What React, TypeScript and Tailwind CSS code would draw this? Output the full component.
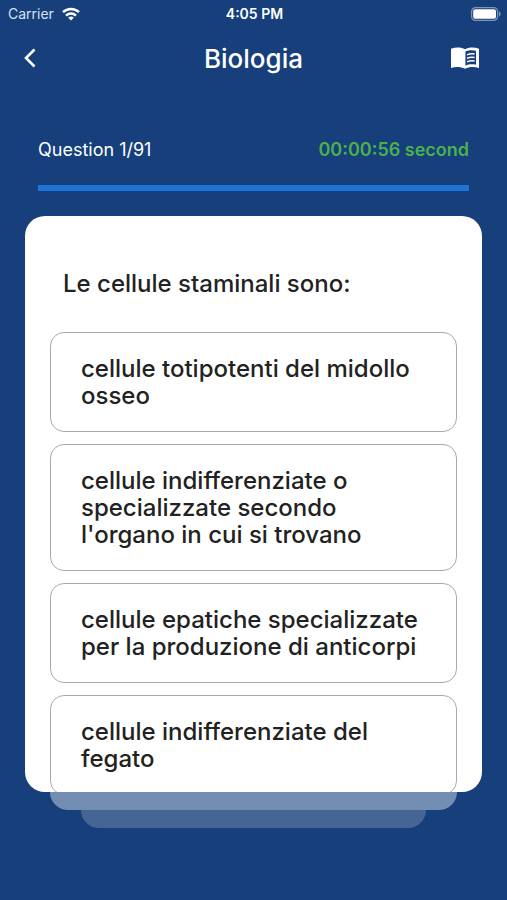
import React from "react";

const question = {
  text: "Le cellule staminali sono:",
  options: [
    "cellule totipotenti del midollo osseo",
    "cellule indifferenziate o specializzate secondo l'organo in cui si trovano",
    "cellule epatiche specializzate per la produzione di anticorpi",
    "cellule indifferenziate del fegato",
  ],
};

function WifiIcon() {
  return (
    <svg viewBox="0 0 18 14" className="w-[18px] h-3.5" fill="none" stroke="currentColor" strokeWidth="2.5">
      <path d="M1 5.2a11.5 11.5 0 0 1 16 0" />
      <path d="M4 8.6a7.2 7.2 0 0 1 10 0" />
      <path d="M9 13.6 6.2 10.8a4.1 4.1 0 0 1 5.6 0z" fill="currentColor" stroke="none" />
    </svg>
  );
}

function BatteryIcon() {
  return (
    <svg viewBox="0 0 30 14" className="w-[30px] h-3.5">
      <rect x="0.6" y="0.6" width="26" height="12.8" rx="4" fill="none" stroke="#7f96b8" strokeWidth="1.2" />
      <rect x="2.2" y="2.2" width="22.8" height="9.6" rx="2" fill="#fff" />
      <path d="M28 4.5c1 .4 1.700 1.300 1.700 2.500s-.7 2.100-1.700 2.500z" fill="#7f96b8" />
    </svg>
  );
}

function BackIcon() {
  return (
    <svg viewBox="0 0 12 20" className="w-3 h-5" fill="none" stroke="currentColor" strokeWidth="2.6">
      <path d="M10.500 1.500 2 10l8.500 8.500" />
    </svg>
  );
}

function BookIcon() {
  return (
    <svg viewBox="0 0 28 22" className="w-7 h-[22px]">
      <path
        d="M0 1.800C4.500 0 10 0 14 2.200 18 0 23.500 0 28 1.800V21c-4.500-1.500-10-1.300-14 .8C10 19.700 4.500 19.500 0 21z"
        fill="currentColor"
      />
      <path d="M14.400 4.600C17.500 3 21.500 2.800 25 3.700v14c-3.500-.8-7.500-.6-10.600 1z" fill="#163f7b" />
      <path
        d="M16 7.800c2.400-1.200 5-1.400 7.600-.9M16 11.300c2.400-1.200 5-1.400 7.600-.9M16 14.800c2.400-1.200 5-1.400 7.600-.9"
        fill="none"
        stroke="currentColor"
        strokeWidth="1.500"
      />
    </svg>
  );
}

function StatusBar() {
  return (
    <div className="grid grid-cols-3 items-center h-7 pl-2 pr-1.5 text-sm">
      <div className="flex items-center gap-2 text-[#d9e2ee]">
        <span>Carrier</span>
        <span className="text-white">
          <WifiIcon />
        </span>
      </div>
      <div className="text-center font-semibold">4:05 PM</div>
      <div className="flex justify-end">
        <BatteryIcon />
      </div>
    </div>
  );
}

export default function App() {
  return (
    <div className="flex flex-col h-screen bg-[#163f7b] text-white font-['Inter',sans-serif]">
      <StatusBar />

      <header className="flex items-center justify-between h-[60px] px-6">
        <button type="button" aria-label="Back" className="w-12">
          <BackIcon />
        </button>
        <h1 className="text-[26px] font-medium">Biologia</h1>
        <button type="button" aria-label="Book" className="flex justify-end w-12 pr-1">
          <BookIcon />
        </button>
      </header>

      <div className="px-[38px] pt-[50px]">
        <div className="flex items-center justify-between h-6 text-lg">
          <span>Question 1/91</span>
          <span className="font-semibold text-[#4caf50]">00:00:56 second</span>
        </div>
        <div className="mt-[23px] h-1.5 bg-[#1d76d6]"></div>
      </div>

      <main className="flex flex-col flex-1 min-h-0 px-[25px] pt-[25px] pb-[72px]">
        <div className="flex-1 min-h-0 overflow-hidden rounded-[20px] bg-white px-[25px] pt-[54px] text-2xl leading-[27px] font-medium text-[#222]">
          <h2 className="px-[13px]">{question.text}</h2>
          <div className="flex flex-col gap-3 mt-[35px]">
            {question.options.map((option) => (
              <button
                key={option}
                type="button"
                className="w-full rounded-[14px] border border-[#aaa] px-[30px] py-[22px] text-left"
              >
                {option}
              </button>
            ))}
          </div>
        </div>
        <div className="mx-[25px] h-[18px] shrink-0 rounded-b-[18px] bg-[#738db3]"></div>
        <div className="mx-14 h-[18px] shrink-0 rounded-b-[18px] bg-[#456594]"></div>
      </main>
    </div>
  );
}
